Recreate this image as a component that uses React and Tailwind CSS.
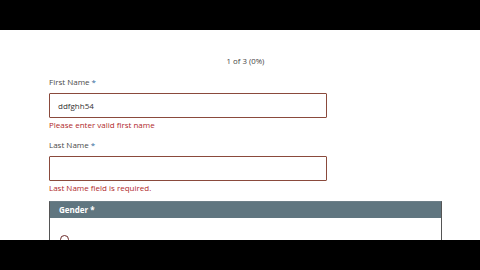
import React from "react";

const Field = ({ label, value, error }) => (
  <div className="flex flex-col">
    <label className="text-[8px] leading-[10px] text-[#4a4a4a] mb-[6px]">
      {label} <span className="text-[#2f6b9a]">*</span>
    </label>
    <div className="h-[25px] w-[278px] border border-[#8a4a3c] rounded-[1px] flex items-center px-[8px] text-[8px] text-[#333]">
      {value}
    </div>
    <p className="text-[8px] leading-[10px] text-[#b0282a] mt-[2px]">{error}</p>
  </div>
);

export default function App() {
  return (
    <div className="w-[480px] h-[270px] bg-white flex flex-col overflow-hidden font-['Open_Sans',sans-serif]">
      <div className="h-[30px] bg-black shrink-0" />
      <div className="flex-1 flex flex-col ml-[49px] w-[393px] overflow-hidden">
        <div className="text-center text-[7.8px] text-[#444] mt-[26px] leading-[10px]">
          1 of 3 (0%)
        </div>
        <div className="mt-[11px]">
          <Field label="First Name" value="ddfghh54" error="Please enter valid first name" />
        </div>
        <div className="mt-[10px]">
          <Field label="Last Name" value="" error="Last Name field is required." />
        </div>
        <div className="mt-[8px] w-[393px] border border-[#555] border-t-[#6d7f88]">
          <div className="h-[16px] bg-[#607680] flex items-center px-[9px] text-[8px] font-bold text-white">
            Gender *
          </div>
          <div className="h-[30px] bg-white pl-[10px] pt-[17px]">
            <div className="w-[9px] h-[9px] rounded-full border border-[#6b2a2a]" />
          </div>
        </div>
      </div>
      <div className="h-[30px] bg-black shrink-0" />
    </div>
  );
}
